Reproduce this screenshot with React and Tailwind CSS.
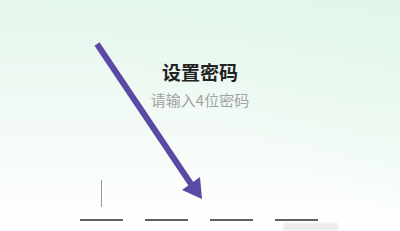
import React from 'react';

export default function App() {
  const slots = [0, 1, 2, 3];

  return (
    <div
      className="relative w-[400px] h-[231px] overflow-hidden bg-gradient-to-b from-[#e4f6ec] via-[#f2faf5] to-white"
      style={{ fontFamily: '"Noto Sans CJK SC", "Noto Sans", sans-serif' }}
    >
      <div className="absolute inset-0 bg-gradient-to-bl from-[#e0f7ea] via-transparent to-transparent opacity-70" />
      <div className="relative flex flex-col items-center pt-[60px]">
        <h1 className="text-[19px] leading-[24px] font-bold text-[#222222]">设置密码</h1>
        <p className="mt-[6px] text-[15px] leading-[20px] text-[#a2a2a2]">请输入4位密码</p>

        <div className="mt-[70px] flex gap-[22px] pr-[3px]">
          {slots.map((i) => (
            <div key={i} className="w-[43px] h-[41px] flex flex-col items-center border-b-2 border-[#616161]">
              {i === 0 && <div className="w-px h-[27px] bg-[#9a9a9a]" />}
            </div>
          ))}
        </div>
      </div>

      {/* faint blurred patch at bottom right */}
      <div className="absolute left-[283px] top-[223px] w-[55px] h-[8px] bg-[#ececec] blur-[1px]" />

      {/* arrow annotation */}
      <svg className="absolute inset-0" width="400" height="231" viewBox="0 0 400 231">
        <line x1="97" y1="44" x2="191" y2="184" stroke="#5a49a5" strokeWidth="6" strokeLinecap="butt" />
        <polygon points="202,199 182,190 200,177" fill="#5a49a5" />
      </svg>
    </div>
  );
}
